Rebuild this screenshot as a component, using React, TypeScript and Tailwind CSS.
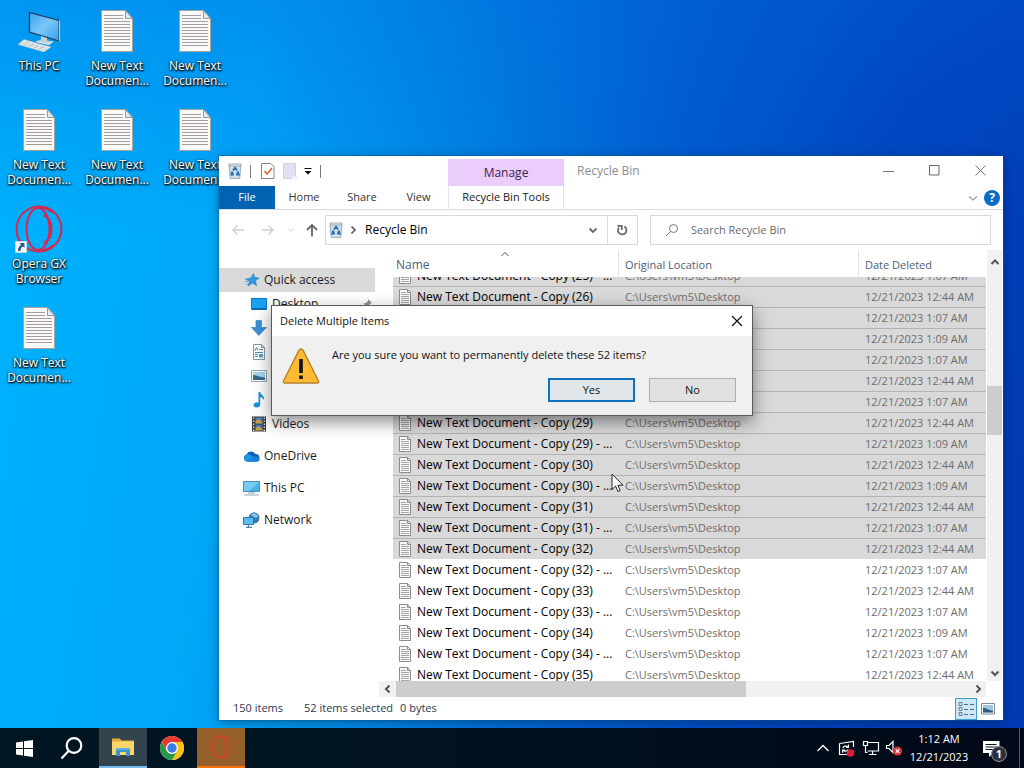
import { useLayoutEffect, useRef, type ReactNode } from "react";

const DATES = { early: "12/21/2023 12:44 AM", mid: "12/21/2023 1:07 AM", late: "12/21/2023 1:09 AM" };

type Row = { n: number; copy: boolean; date: string; selected: boolean };

const ROWS: Row[] = [
  { n: 25, copy: true, date: DATES.mid, selected: true },
  { n: 26, copy: false, date: DATES.early, selected: true },
  { n: 26, copy: true, date: DATES.mid, selected: true },
  { n: 27, copy: false, date: DATES.late, selected: true },
  { n: 27, copy: true, date: DATES.mid, selected: true },
  { n: 28, copy: false, date: DATES.early, selected: true },
  { n: 28, copy: true, date: DATES.mid, selected: true },
  { n: 29, copy: false, date: DATES.early, selected: true },
  { n: 29, copy: true, date: DATES.late, selected: true },
  { n: 30, copy: false, date: DATES.early, selected: true },
  { n: 30, copy: true, date: DATES.late, selected: true },
  { n: 31, copy: false, date: DATES.early, selected: true },
  { n: 31, copy: true, date: DATES.mid, selected: true },
  { n: 32, copy: false, date: DATES.early, selected: true },
  { n: 32, copy: true, date: DATES.mid, selected: false },
  { n: 33, copy: false, date: DATES.early, selected: false },
  { n: 33, copy: true, date: DATES.mid, selected: false },
  { n: 34, copy: false, date: DATES.late, selected: false },
  { n: 34, copy: true, date: DATES.mid, selected: false },
  { n: 35, copy: false, date: DATES.early, selected: false },
  { n: 35, copy: true, date: DATES.mid, selected: false },
];

/* ---------- icons ---------- */

function DocLarge() {
  return (
    <svg width="32" height="42" viewBox="0 0 32 42" aria-hidden="true">
      <path d="M.5.5h24l7 8v33H.5z" fill="#fafafa" stroke="#a9a29c" />
      <path d="M24.500.5v8h7z" fill="#dfe9ee" stroke="#8f9aa0" />
      <path
        d="M3 5.500h19M3 8.500h19M3 11.500h26M3 14.500h26M3 17.500h26M3 20.500h26M3 23.500h26M3 26.500h26M3 29.500h26M3 32.500h26M3 35.500h26"
        stroke="#a39c98"
      />
    </svg>
  );
}

function ThisPcLarge() {
  return (
    <svg width="44" height="42" viewBox="0 0 44 42" aria-hidden="true">
      <defs>
        <linearGradient id="pcScreen" x1="0" y1="0" x2="1" y2="1">
          <stop offset="0" stopColor="#3aa4ef" />
          <stop offset="0.5" stopColor="#7cc6f8" />
          <stop offset="1" stopColor="#2f9ff0" />
        </linearGradient>
      </defs>
      <path d="M12.500 2.500l29.500 8v20.500l-29.500-9z" fill="url(#pcScreen)" stroke="#203a50" strokeWidth="1.200" />
      <path d="M42.500 10.500v21" stroke="#b9c3ca" strokeWidth="1.200" />
      <path d="M24 26l6 2v2.500l6 1-4 3-13-3 5-2z" fill="#c9d0d5" />
      <path d="M19 31.500l13 3 4-3" fill="none" stroke="#eef2f5" />
      <path d="M7 29.500L34 37l-7 5L1 34.500z" fill="#e9eef1" stroke="#aab4bb" strokeWidth=".6" />
      <path d="M6 32l24 6.500M4 33.500l24 6.500M12 31l-5 4.500M17 32.500l-5 4.500M22 34l-5 4.500M27 35.500l-5 4.500" stroke="#b3bcc2" strokeWidth=".7" />
    </svg>
  );
}

function OperaRing({ size, color }: { size: number; color: string }) {
  return (
    <svg width={size} height={size} viewBox="0 0 48 48" fill="none" stroke={color} aria-hidden="true">
      <circle cx="24" cy="24" r="22.500" strokeWidth="2" />
      <ellipse cx="23" cy="24" rx="11.500" ry="21" strokeWidth="2" />
      <path d="M29 10c5 3 7.500 8 7.500 14S34 35 29 38" strokeWidth="2.200" />
      <path d="M23 3c8-.5 12 2 15 5M23 45c8 .5 12-2 15-5" strokeWidth="1.600" />
    </svg>
  );
}

function BinIcon() {
  return (
    <svg width="14" height="16" viewBox="0 0 14 16" aria-hidden="true">
      <path d="M1 2.500h12l-1.300 13H2.300z" fill="#d3e0ea" stroke="#8f9ca6" strokeWidth=".8" />
      <path d="M1 1h12v2H1z" fill="#eef3f6" stroke="#8c979f" strokeWidth=".8" />
      <path d="M5 7.500L7 4.800l2 2.700M4.600 8.500l-1.300 3h2.600M9.400 8.500l1.300 3H8" fill="none" stroke="#1d6fb8" strokeWidth="1.900" />
    </svg>
  );
}

function DocSmall() {
  return (
    <svg width="14" height="17" viewBox="0 0 14 17" className="shrink-0" aria-hidden="true">
      <path d="M1.500.5h8l3 3v12h-11z" fill="#fbfbfb" stroke="#8b8b8b" />
      <path d="M9.500.5v3h3" fill="none" stroke="#8b8b8b" />
      <path d="M3 3.500h5M3 5.500h8M3 7.500h8M3 9.500h8M3 11.500h8M3 13.500h8" stroke="#a3a3a3" />
    </svg>
  );
}

function Chevron({ d, color = "#555", width = 1.6 }: { d: string; color?: string; width?: number }) {
  return (
    <svg width="12" height="12" viewBox="0 0 12 12" fill="none" stroke={color} strokeWidth={width} aria-hidden="true">
      <path d={d} />
    </svg>
  );
}
const UP = "M2.500 8L6 4.500 9.500 8";
const DOWN = "M2.500 4.500L6 8l3.500-3.500";
const LEFT = "M7.500 2.500L4 6l3.500 3.500";
const RIGHT = "M4.500 2.500L8 6 4.500 9.500";

function StarIcon() {
  return (
    <svg width="16" height="16" viewBox="0 0 16 16" aria-hidden="true">
      <path d="M9.500 1.500l1 4 4.500.5-3.500 2.800 1 4.700L8.500 11l-4.500 3 1.500-4.500L2 7l4.800-.8z" fill="#2f9be0" stroke="#1b78b8" strokeWidth=".6" />
      <path d="M1 9.500h3M2 12h2.500M0.500 7h2" stroke="#5fb4e6" />
    </svg>
  );
}
function DesktopIcon() {
  return (
    <svg width="16" height="16" viewBox="0 0 16 16" aria-hidden="true">
      <path d="M.5 2.500h15v11H.5z" fill="#1ba1f2" stroke="#0a78c8" />
      <path d="M1 13h14" stroke="#075d9e" strokeWidth="1.400" />
    </svg>
  );
}
function DownloadIcon() {
  return (
    <svg width="16" height="16" viewBox="0 0 16 16" aria-hidden="true">
      <path d="M5 .5h5.500v7h5L7.800 15.500.5 7.500H5z" fill="#3c8fdc" stroke="#2a78c4" strokeWidth=".6" />
    </svg>
  );
}
function DocumentsIcon() {
  return (
    <svg width="16" height="16" viewBox="0 0 16 16" aria-hidden="true">
      <path d="M2.500.5h8l3 3v12h-11z" fill="#fff" stroke="#8395a2" />
      <path d="M10.500.5v3h3" fill="none" stroke="#8395a2" />
      <path d="M4 6.500l1.500-3L7 6.500M4 8.500h8M4 10.500h3M4 12.500h3M8.500 5.500H12" fill="none" stroke="#4e86ad" />
      <path d="M8 10h4v3.500H8z" fill="#5f9cc4" />
    </svg>
  );
}
function PictureIcon() {
  return (
    <svg width="16" height="16" viewBox="0 0 16 16" aria-hidden="true">
      <path d="M.5 2.500h15v11H.5z" fill="#fff" stroke="#98a3ab" />
      <path d="M2 4h12v8H2z" fill="#a9d5f0" />
      <path d="M2 7c4 0 6 2.500 12 2.500V12H2z" fill="#37698c" />
    </svg>
  );
}
function MusicIcon() {
  return (
    <svg width="16" height="16" viewBox="0 0 16 16" aria-hidden="true">
      <path d="M7.500 0h1.700c.4 2.800 4.500 3.600 4 8.500-.8-2-2-3-4-3.300V12.500c0 1.800-1.400 3-3.300 3S2.500 14.600 2.500 13c0-1.800 2.200-3 5-2.500z" fill="#1b93dd" />
    </svg>
  );
}
function VideoIcon() {
  return (
    <svg width="16" height="16" viewBox="0 0 16 16" aria-hidden="true">
      <path d="M1 .5h14v15H1z" fill="#33363a" />
      <path d="M4.500 1.500h7v6h-7z" fill="#4f7fc2" />
      <path d="M4.500 8.500h7v6h-7z" fill="#4373b4" />
      <path d="M4.500 5l3-2 4 3v1.500h-7zM4.500 12l3-2 4 3v1.500h-7z" fill="#c4a03f" />
      <path d="M2.700 1.500v14M13.300 1.500v14" stroke="#e7e7e7" strokeWidth="1.300" strokeDasharray="1.500 1.500" />
    </svg>
  );
}
function CloudIcon() {
  return (
    <svg width="17" height="16" viewBox="0 0 17 16" aria-hidden="true">
      <path d="M4 13.500a3.600 3.600 0 01-.5-7A5 5 0 0112.500 6a3.800 3.800 0 011 7.500z" fill="#0f5fb4" />
      <path d="M4 13.500a3.600 3.600 0 01-.5-7c2.500-.6 4 .5 6 2l7 3.500c-.8 1-1.700 1.500-3 1.500z" fill="#1f93e4" />
      <path d="M4 13.500L11 8.500c3-.8 5.500.8 5.500 2.800 0 1.400-1.200 2.200-3 2.200z" fill="#1580d6" />
    </svg>
  );
}
function MonitorIcon() {
  return (
    <svg width="17" height="16" viewBox="0 0 17 16" aria-hidden="true">
      <path d="M.5 1.500h16v10H.5z" fill="#45b2ea" stroke="#4a8db5" />
      <path d="M1 2h15L6 11H1z" fill="#74ccf4" />
      <path d="M5 13h7M1 15h15" stroke="#8fa9ba" strokeWidth="1.200" />
    </svg>
  );
}
function NetworkIcon() {
  return (
    <svg width="17" height="16" viewBox="0 0 17 16" aria-hidden="true">
      <circle cx="11" cy="6" r="5.500" fill="#3b7fb2" />
      <path d="M7 3l4-2.500 5 3-3 3zM11 10l4.500-2" fill="#8cc5e8" stroke="#2d6b9b" strokeWidth=".6" />
      <path d="M.5 5.500h10v7H.5z" fill="#57bdf0" stroke="#2f76a8" />
      <path d="M5.500 13v2M3 15.300h6" stroke="#4b86ad" strokeWidth="1.200" />
    </svg>
  );
}

/* ---------- desktop ---------- */

function DesktopItem({ icon, lines }: { icon: ReactNode; lines: string[] }) {
  return (
    <button
      type="button"
      className="flex h-[99px] w-[78px] flex-col items-center pt-[7px] text-white [text-shadow:0_1px_2px_#000,1px_1px_2px_#000,0_0_3px_#00000080]"
    >
      <span className="flex h-12 items-center justify-center">{icon}</span>
      <span className="mt-[3px] text-[12px] leading-[15px]">
        {lines.map((line) => (
          <span key={line} className="block whitespace-nowrap">
            {line}
          </span>
        ))}
      </span>
    </button>
  );
}

function TextFile() {
  return <DesktopItem icon={<DocLarge />} lines={["New Text", "Documen..."]} />;
}

function OperaShortcut() {
  return (
    <span className="relative block">
      <OperaRing size={48} color="#d9264f" />
      <svg width="12" height="12" viewBox="0 0 12 12" className="absolute bottom-0 left-0" aria-hidden="true">
        <path d="M.5.5h11v11H.5z" fill="#fff" stroke="#c8d3da" />
        <path d="M4.500 2h5v5L8 5.500C6 6.500 5.500 8 5.500 10H3c0-3 1-5 3.200-6.300z" fill="#2458a6" />
      </svg>
    </span>
  );
}

/* ---------- explorer window ---------- */

function NavItem({ icon, label, level = 0, active = false, pinned = false }: { icon: ReactNode; label: string; level?: number; active?: boolean; pinned?: boolean }) {
  return (
    <a
      href="#"
      className={`mr-1 flex h-6 items-center ${level ? "gap-[5px] pl-[31px]" : "gap-1 pl-6"} ${active ? "bg-[#d9d9d9]" : ""}`}
    >
      <span className="flex w-[17px] shrink-0 justify-center">{icon}</span>
      <span>{label}</span>
      {pinned && (
        <svg width="12" height="12" viewBox="0 0 12 12" className="mr-0.5 ml-auto" aria-hidden="true">
          <path d="M7 1l4 4-1.500.5-2 2L7 10 2.500 5.500 5 5l2-2z" fill="#8a9299" />
          <path d="M4.500 7.500L1 11" stroke="#8a9299" />
        </svg>
      )}
    </a>
  );
}

function FileTable() {
  const pane = useRef<HTMLDivElement>(null);
  useLayoutEffect(() => {
    if (pane.current) pane.current.scrollTop = 12;
  }, []);

  const th = "sticky top-0 z-10 h-[27px] bg-white p-0 pt-[3px] text-left align-middle font-normal text-[#4c607a]";
  return (
    <div ref={pane} className="min-h-0 flex-1 overflow-hidden pl-[14px]">
      <table className="w-full table-fixed border-separate border-spacing-0">
        <colgroup>
          <col className="w-[225px]" />
          <col className="w-[240px]" />
          <col />
        </colgroup>
        <thead>
          <tr>
            <th className={`${th} pl-[3px]`}>
              Name
              <span className="absolute -top-0.5 left-[106px]">
                <Chevron d={UP} width={1} />
              </span>
            </th>
            <th className={`${th} border-l border-[#e2e2e2] pl-[6px] text-[11px]`}>Original Location</th>
            <th className={`${th} border-l border-[#e2e2e2] pl-[6px] text-[11px]`}>Date Deleted</th>
          </tr>
        </thead>
        <tbody>
          {ROWS.map((r) => {
            const td = `h-[21px] p-0 border-t ${r.selected ? "border-[#b4b4b4]" : "border-transparent"}`;
            return (
              <tr key={`${r.n}-${r.copy}`} className={r.selected ? "bg-[#d9d9d9]" : "bg-white"}>
                <td className={td}>
                  <span className="flex h-5 items-center gap-[5px] pl-[5px] whitespace-nowrap text-black">
                    <DocSmall />
                    {`New Text Document - Copy (${r.n})${r.copy ? " - ..." : ""}`}
                  </span>
                </td>
                <td className={`${td} pl-[7px] text-[11px] leading-5 text-[#6d6d6d]`}>C:\Users\vm5\Desktop</td>
                <td className={`${td} pl-[7px] text-[11px] leading-5 whitespace-nowrap text-[#6d6d6d]`}>{r.date}</td>
              </tr>
            );
          })}
        </tbody>
      </table>
    </div>
  );
}

function Explorer() {
  return (
    <section
      aria-label="Recycle Bin"
      className="absolute top-[156px] right-[21px] bottom-2 left-[219px] flex flex-col bg-white text-[12px] text-[#1a1a1a] shadow-[0_0_0_1px_rgba(0,90,160,0.45),0_2px_10px_rgba(0,0,0,0.35)]"
    >
      <header className="flex h-[30px] shrink-0">
        <div className="flex w-[229px] items-center pl-[9px]">
          <BinIcon />
          <span className="ml-2 h-[13px] w-px bg-[#777]" />
          <button type="button" aria-label="Properties" className="ml-[10px]">
            <svg width="14" height="16" viewBox="0 0 14 16" className="block" aria-hidden="true">
              <path d="M.5.5h9l3.500 3v12H.5z" fill="#fff" stroke="#85888c" />
              <path d="M3.500 8l2.500 3 5-6" fill="none" stroke="#e0693a" strokeWidth="1.700" />
            </svg>
          </button>
          <button type="button" aria-label="New folder" className="ml-2">
            <svg width="14" height="16" viewBox="0 0 14 16" className="block" aria-hidden="true">
              <path d="M.5.5h12v15H.5z" fill="#dfe1f3" stroke="#d0d3e8" />
              <path d="M9 13h5v3H9z" fill="#eef0fa" />
            </svg>
          </button>
          <button type="button" aria-label="Customize Quick Access Toolbar" className="ml-[6px]">
            <svg width="10" height="10" viewBox="0 0 10 10" className="block" aria-hidden="true">
              <path d="M1.500 2.500h7" stroke="#111" />
              <path d="M1.500 5h7L5 8.500z" fill="#111" />
            </svg>
          </button>
          <span className="ml-[7px] h-[13px] w-px bg-[#777]" />
        </div>
        <div className="mt-[3px] flex w-[116px] items-center justify-center bg-[#ebcdfb] text-[#3b2350]">Manage</div>
        <h1 className="ml-[13px] flex items-center text-[#8d8d8d]">Recycle Bin</h1>
        <div className="ml-auto flex pb-[2px] text-[#777]">
          <button type="button" aria-label="Minimize" className="flex w-[46px] items-center justify-center">
            <svg width="11" height="11" viewBox="0 0 11 11" stroke="currentColor" aria-hidden="true">
              <path d="M0 6.500h11" />
            </svg>
          </button>
          <button type="button" aria-label="Maximize" className="flex w-[46px] items-center justify-center">
            <svg width="11" height="11" viewBox="0 0 11 11" fill="none" stroke="#666" aria-hidden="true">
              <path d="M.5.5h9.500v9.500H.5z" />
            </svg>
          </button>
          <button type="button" aria-label="Close" className="flex w-[46px] items-center justify-center">
            <svg width="11" height="11" viewBox="0 0 11 11" stroke="currentColor" aria-hidden="true">
              <path d="M.5.5l10 10M10.500.5l-10 10" />
            </svg>
          </button>
        </div>
      </header>

      <nav aria-label="Ribbon" className="flex h-6 shrink-0 border-b border-[#dadbdc] text-[11px] text-[#333]">
        <button type="button" className="w-14 bg-[#0063b1] text-white">
          File
        </button>
        <button type="button" className="w-[58px]">
          Home
        </button>
        <button type="button" className="w-[58px]">
          Share
        </button>
        <button type="button" className="w-[57px] pr-0.5">
          View
        </button>
        <button type="button" className="w-[116px] border-x border-[#eadcf2] whitespace-nowrap text-[#1a1a1a]">
          Recycle Bin Tools
        </button>
        <div className="ml-auto flex items-center gap-[5px]">
          <button type="button" aria-label="Expand the Ribbon">
            <svg width="12" height="12" viewBox="0 0 12 12" fill="none" stroke="#9a9a9a" strokeWidth="1.200" className="block" aria-hidden="true">
              <path d="M2 4.500L6 8l4-3.500" />
            </svg>
          </button>
          <button type="button" aria-label="Help" className="flex items-center pr-[3px]">
            <span className="flex size-4 items-center justify-center rounded-full bg-[#0a6cc4] text-[12px] leading-4 font-bold text-white">?</span>
          </button>
        </div>
      </nav>

      <div className="flex h-10 shrink-0 items-center pr-3">
        <div className="flex w-[106px] items-center">
          <button type="button" aria-label="Back" className="ml-3">
            <svg width="14" height="12" viewBox="0 0 14 12" fill="none" stroke="#d0d0d0" strokeWidth="1.500" className="block" aria-hidden="true">
              <path d="M13 6H2M6.500 1.500L2 6l4.500 4.500" />
            </svg>
          </button>
          <button type="button" aria-label="Forward" className="ml-4">
            <svg width="14" height="12" viewBox="0 0 14 12" fill="none" stroke="#d0d0d0" strokeWidth="1.500" className="block" aria-hidden="true">
              <path d="M1 6h11M7.500 1.500L12 6l-4.500 4.500" />
            </svg>
          </button>
          <button type="button" aria-label="Recent locations" className="ml-[11px]">
            <svg width="10" height="10" viewBox="0 0 10 10" fill="none" stroke="#cfcfcf" className="block" aria-hidden="true">
              <path d="M2.500 4L5 6l2.500-2" />
            </svg>
          </button>
          <button type="button" aria-label="Up" className="ml-[9px]">
            <svg width="14" height="14" viewBox="0 0 14 14" fill="none" stroke="#666" strokeWidth="1.800" className="block" aria-hidden="true">
              <path d="M7 13.500V2M2 7l5-5 5 5" />
            </svg>
          </button>
        </div>
        <div className="flex h-[30px] flex-[11] items-center border border-[#d9d9d9]">
          <span className="ml-[3px]">
            <BinIcon />
          </span>
          <span className="ml-1">
            <Chevron d={RIGHT} />
          </span>
          <button type="button" className="ml-[6px] text-black">
            Recycle Bin
          </button>
          <button type="button" aria-label="Previous locations" className="mr-2 ml-auto">
            <Chevron d={DOWN} width={1.8} color="#666" />
          </button>
          <button type="button" aria-label="Refresh" className="flex h-full w-[30px] items-center justify-center border-l border-[#d9d9d9]">
            <svg width="12" height="12" viewBox="0 0 12 12" fill="none" stroke="#666" strokeWidth="1.700" aria-hidden="true">
              <path d="M8.300 2.600A4.200 4.200 0 113 3.600" />
              <path d="M1.500 1.800h4.300v4.200" />
            </svg>
          </button>
        </div>
        <label className="ml-3 flex h-[30px] flex-[12] items-center border border-[#dcd6d8]">
          <svg width="14" height="14" viewBox="0 0 14 14" fill="none" stroke="#777" className="ml-[14px] shrink-0" aria-hidden="true">
            <circle cx="8.500" cy="5.500" r="4" />
            <path d="M5.500 8.500L1 13" />
          </svg>
          <input
            type="text"
            aria-label="Search Recycle Bin"
            placeholder="Search Recycle Bin"
            className="ml-3 min-w-0 flex-1 bg-transparent text-[11px] outline-none placeholder:text-[#6b6b6b]"
          />
        </label>
      </div>

      <div className="flex min-h-0 flex-1">
        <nav aria-label="Folders" className="w-40 shrink-0 pt-[18px]">
          <NavItem icon={<StarIcon />} label="Quick access" active />
          <NavItem icon={<DesktopIcon />} label="Desktop" level={1} pinned />
          <NavItem icon={<DownloadIcon />} label="Downloads" level={1} pinned />
          <NavItem icon={<DocumentsIcon />} label="Documents" level={1} pinned />
          <NavItem icon={<PictureIcon />} label="Pictures" level={1} pinned />
          <NavItem icon={<MusicIcon />} label="Music" level={1} />
          <NavItem icon={<VideoIcon />} label="Videos" level={1} />
          <div className="mt-2 flex flex-col gap-2">
            <NavItem icon={<CloudIcon />} label="OneDrive" />
            <NavItem icon={<MonitorIcon />} label="This PC" />
            <NavItem icon={<NetworkIcon />} label="Network" />
          </div>
        </nav>

        <div className="flex min-w-0 flex-1 flex-col">
          <div className="flex min-h-0 flex-1">
            <FileTable />
            <div className="mr-px ml-px flex w-[15px] flex-col items-center bg-[#f1f1f1]">
              <button type="button" aria-label="Scroll up" className="mt-1 flex h-[15px] items-center">
                <Chevron d={UP} width={2} />
              </button>
              <div className="flex w-full flex-1 flex-col">
                <div className="flex-[117]" />
                <div className="w-full flex-[49] bg-[#cdcdcd]" />
                <div className="flex-[229]" />
              </div>
              <button type="button" aria-label="Scroll down" className="flex h-[17px] items-center">
                <Chevron d={DOWN} width={2} />
              </button>
            </div>
          </div>
          <div className="mr-[17px] flex h-4 shrink-0 items-center bg-[#f1f1f1]">
            <button type="button" aria-label="Scroll left" className="flex w-[17px] justify-center">
              <Chevron d={LEFT} width={2} />
            </button>
            <div className="flex h-full flex-1">
              <div className="h-full flex-[350] bg-[#cdcdcd]" />
              <div className="flex-[223]" />
            </div>
            <button type="button" aria-label="Scroll right" className="flex w-[17px] justify-center">
              <Chevron d={RIGHT} width={2} />
            </button>
          </div>
        </div>
      </div>

      <footer className="flex h-[23px] shrink-0 items-center pl-[14px] text-[11px] text-[#2b3a4f]">
        <span className="w-[71px]">150 items</span>
        <span className="w-24 whitespace-nowrap">52 items selected</span>
        <span>0 bytes</span>
        <button type="button" aria-label="Details view" className="ml-auto flex size-[22px] items-center justify-center border border-[#3f9bd0] bg-[#cbe8f8]">
          <svg width="17" height="14" viewBox="0 0 17 14" fill="none" aria-hidden="true">
            <path d="M1 .5h3v3H1zM1 5.500h3v3H1zM1 10.500h3v3H1z" stroke="#6f7f8a" />
            <path d="M6 2.500h4M12 2.500h4M6 7.500h4M12 7.500h4M6 12.500h4M12 12.500h4" stroke="#5d6d78" />
          </svg>
        </button>
        <button type="button" aria-label="Large thumbnails" className="mr-2 ml-1">
          <svg width="14" height="12" viewBox="0 0 14 12" className="block" aria-hidden="true">
            <path d="M.5.5h13v10.500H.5z" fill="#fff" stroke="#7d8a94" />
            <path d="M2 2h10v7.500H2z" fill="#9dc7e6" />
            <path d="M2 5c4 0 5 2.500 10 2.500v2H2z" fill="#2c5a80" />
          </svg>
        </button>
      </footer>
    </section>
  );
}

/* ---------- dialog ---------- */

function DeleteDialog() {
  return (
    <div
      role="dialog"
      aria-labelledby="dialog-title"
      className="absolute top-[305px] left-[271px] w-[482px] border border-[#5a5a5a] bg-[#f0f0f0] text-[11px] text-[#111] shadow-[0_6px_16px_rgba(0,0,0,0.45)]"
    >
      <div className="flex h-[30px] items-center justify-between bg-white pr-[9px] pl-2">
        <h2 id="dialog-title">Delete Multiple Items</h2>
        <button type="button" aria-label="Close">
          <svg width="12" height="12" viewBox="0 0 12 12" stroke="#111" strokeWidth="1.200" className="block" aria-hidden="true">
            <path d="M1 1l10 10M11 1L1 11" />
          </svg>
        </button>
      </div>
      <div className="flex pt-3 pr-4 pb-[13px] pl-[10px]">
        <svg width="38" height="37" viewBox="0 0 38 37" className="shrink-0" aria-hidden="true">
          <path d="M19 1c1 0 1.600.5 2.100 1.400l15.300 30.300c.8 1.600 0 2.300-1.700 2.300H3.300c-1.700 0-2.500-.7-1.700-2.300L16.900 2.400C17.400 1.500 18 1 19 1z" fill="#fdbb35" stroke="#b18328" strokeWidth="1.400" />
          <path d="M17.200 11h3.600v14h-3.600zM17.200 27.500h3.600V31h-3.600z" fill="#111" />
        </svg>
        <div className="ml-3 flex flex-1 flex-col">
          <p className="leading-[14px]">Are you sure you want to permanently delete these 52 items?</p>
          <div className="mt-4 flex justify-end gap-[14px]">
            <button type="button" className="h-6 w-[87px] border-2 border-[#0f71bd] bg-[#e1e6ea]">
              Yes
            </button>
            <button type="button" className="h-6 w-[87px] border border-[#adadad] bg-[#e1e1e1]">
              No
            </button>
          </div>
        </div>
      </div>
    </div>
  );
}

/* ---------- taskbar ---------- */

function Taskbar() {
  return (
    <footer className="relative flex h-10 shrink-0 items-stretch bg-linear-to-r from-[#001622] via-[#00121f] to-[#020817] text-[11px] text-white">
      <button type="button" aria-label="Start" className="flex w-12 items-center justify-center">
        <svg width="17" height="17" viewBox="0 0 17 17" fill="#fff" aria-hidden="true">
          <path d="M0 2.400L7 1.400V8H0zM8 1.300L17 0v8H8zM0 9h7v6.600l-7-1zM8 9h9v8l-9-1.300z" />
        </svg>
      </button>
      <button type="button" aria-label="Search" className="flex w-12 items-center justify-center">
        <svg width="24" height="24" viewBox="0 0 24 24" fill="none" stroke="#fff" strokeWidth="2.200" aria-hidden="true">
          <circle cx="14" cy="9.500" r="7.300" />
          <path d="M8.800 14.800L1.500 22.500" />
        </svg>
      </button>
      <button type="button" aria-label="File Explorer" className="ml-[3px] flex w-12 items-center justify-center border-b-2 border-[#76b9ed] bg-[#33444f]">
        <svg width="22" height="20" viewBox="0 0 22 20" aria-hidden="true">
          <path d="M0 1.500h8l1.500 2H22V18H0z" fill="#e9ac35" />
          <path d="M0 4.500h22V18H0z" fill="#fcd669" />
          <path d="M4 11h14v8h-4v-4H8v4H4z" fill="#3c93cf" />
          <path d="M4 11h14v2H4z" fill="#62b0e0" />
        </svg>
      </button>
      <button type="button" aria-label="Google Chrome" className="ml-px flex w-12 items-center justify-center">
        <svg width="24" height="24" viewBox="0 0 24 24" aria-hidden="true">
          <circle cx="12" cy="12" r="12" fill="#fff" />
          <path d="M12 6h10.400A12 12 0 0112 24l5.200-9z" fill="#fbc116" />
          <path d="M6.800 15L1.600 6A12 12 0 0012 24l5.200-9z" fill="#279847" />
          <path d="M12 6h10.400A12 12 0 001.600 6l5.200 9z" fill="#e33b2e" />
          <circle cx="12" cy="12" r="6" fill="#fff" />
          <circle cx="12" cy="12" r="4.700" fill="#3a7be8" />
        </svg>
      </button>
      <button type="button" aria-label="Opera GX" className="ml-px flex w-12 items-center justify-center border-b-2 border-[#f7730c] bg-[#96602a]">
        <OperaRing size={24} color="#dc3a35" />
      </button>

      <div className="ml-auto flex items-center">
        <button type="button" aria-label="Show hidden icons">
          <svg width="14" height="12" viewBox="0 0 14 12" fill="none" stroke="#fff" strokeWidth="1.300" className="block" aria-hidden="true">
            <path d="M1.500 9L7 3.500 12.500 9" />
          </svg>
        </button>
        <button type="button" aria-label="Update status" className="ml-2">
          <svg width="18" height="17" viewBox="0 0 18 17" fill="none" stroke="#fff" strokeWidth="1.200" className="block" aria-hidden="true">
            <path d="M1.500 3.500l14-2V7M1.500 3.500v11h8" />
            <path d="M5 8c.5-2 3.500-2.500 5-1M10.500 4.500V7.300H8M10 9.500c-.7 2-3.500 2.300-5 .8M4.600 12.800v-2.600h2.600" />
            <circle cx="12.500" cy="13" r="3.800" fill="#e11d3c" stroke="none" />
          </svg>
        </button>
        <button type="button" aria-label="Network" className="ml-[6px]">
          <svg width="18" height="16" viewBox="0 0 18 16" fill="none" stroke="#fff" strokeWidth="1.200" className="block" aria-hidden="true">
            <path d="M5.500 2.500h11v8.500h-11M10.500 11v3M7 14.500h7.500" />
            <path d="M1.500 1.500h4v4h-4zM3.500 5.500v7h2" />
          </svg>
        </button>
        <button type="button" aria-label="Volume muted" className="ml-[5px]">
          <svg width="18" height="18" viewBox="0 0 18 18" fill="none" stroke="#fff" strokeWidth="1.200" className="block" aria-hidden="true">
            <path d="M1.500 6.500h2.500l4-4v11l-4-4H1.500z" />
            <circle cx="12.500" cy="12" r="4.600" fill="#d9343c" stroke="none" />
            <path d="M10.700 10.200l3.600 3.600M14.300 10.200l-3.600 3.600" />
          </svg>
        </button>
        <button type="button" className="ml-[5px] w-[62px] text-center leading-[18px] whitespace-nowrap">
          <span className="block">1:12 AM</span>
          <span className="block">12/21/2023</span>
        </button>
        <button type="button" aria-label="1 new notification" className="relative ml-[13px] flex h-full w-[41px] items-center">
          <svg width="17" height="17" viewBox="0 0 17 17" aria-hidden="true">
            <path d="M0 1h16.500v12H10l-4 4v-4H0z" fill="#fff" />
            <path d="M2.500 4.500h11M2.500 7h11M2.500 9.500h11" stroke="#0a1524" />
          </svg>
          <span className="absolute top-[18px] left-2 flex size-4 items-center justify-center rounded-full border border-[#8d9298] bg-[#2a3038] font-bold">1</span>
        </button>
      </div>
      <span className="absolute top-0 right-1 h-full w-px bg-[#50586a]" />
    </footer>
  );
}

export default function App() {
  return (
    <div className="flex h-screen min-h-[600px] w-full flex-col overflow-hidden font-['Open_Sans','Noto_Sans',sans-serif] select-none">
      <main className="relative min-h-0 flex-1 bg-[linear-gradient(180deg,rgba(0,98,220,0.35)_0%,rgba(0,98,220,0)_32%),linear-gradient(98deg,#00b2fc_0%,#00a8f8_24%,#0086e4_42%,#005acd_62%,#0042bd_82%,#003ab2_100%)]">
        <div className="flex">
          <div className="flex flex-col">
            <DesktopItem icon={<ThisPcLarge />} lines={["This PC"]} />
            <TextFile />
            <DesktopItem icon={<OperaShortcut />} lines={["Opera GX", "Browser"]} />
            <TextFile />
          </div>
          <div className="flex flex-col">
            <TextFile />
            <TextFile />
          </div>
          <div className="flex flex-col">
            <TextFile />
            <TextFile />
          </div>
        </div>
        <Explorer />
        <DeleteDialog />
        <svg width="13" height="20" viewBox="0 0 13 20" className="absolute top-[473px] left-[611px]" aria-hidden="true">
          <path d="M1 1v15.500l3.600-3.400 2.300 5.400 2.300-1-2.300-5.300H12z" fill="#fff" stroke="#111" strokeWidth=".9" />
        </svg>
      </main>
      <Taskbar />
    </div>
  );
}
